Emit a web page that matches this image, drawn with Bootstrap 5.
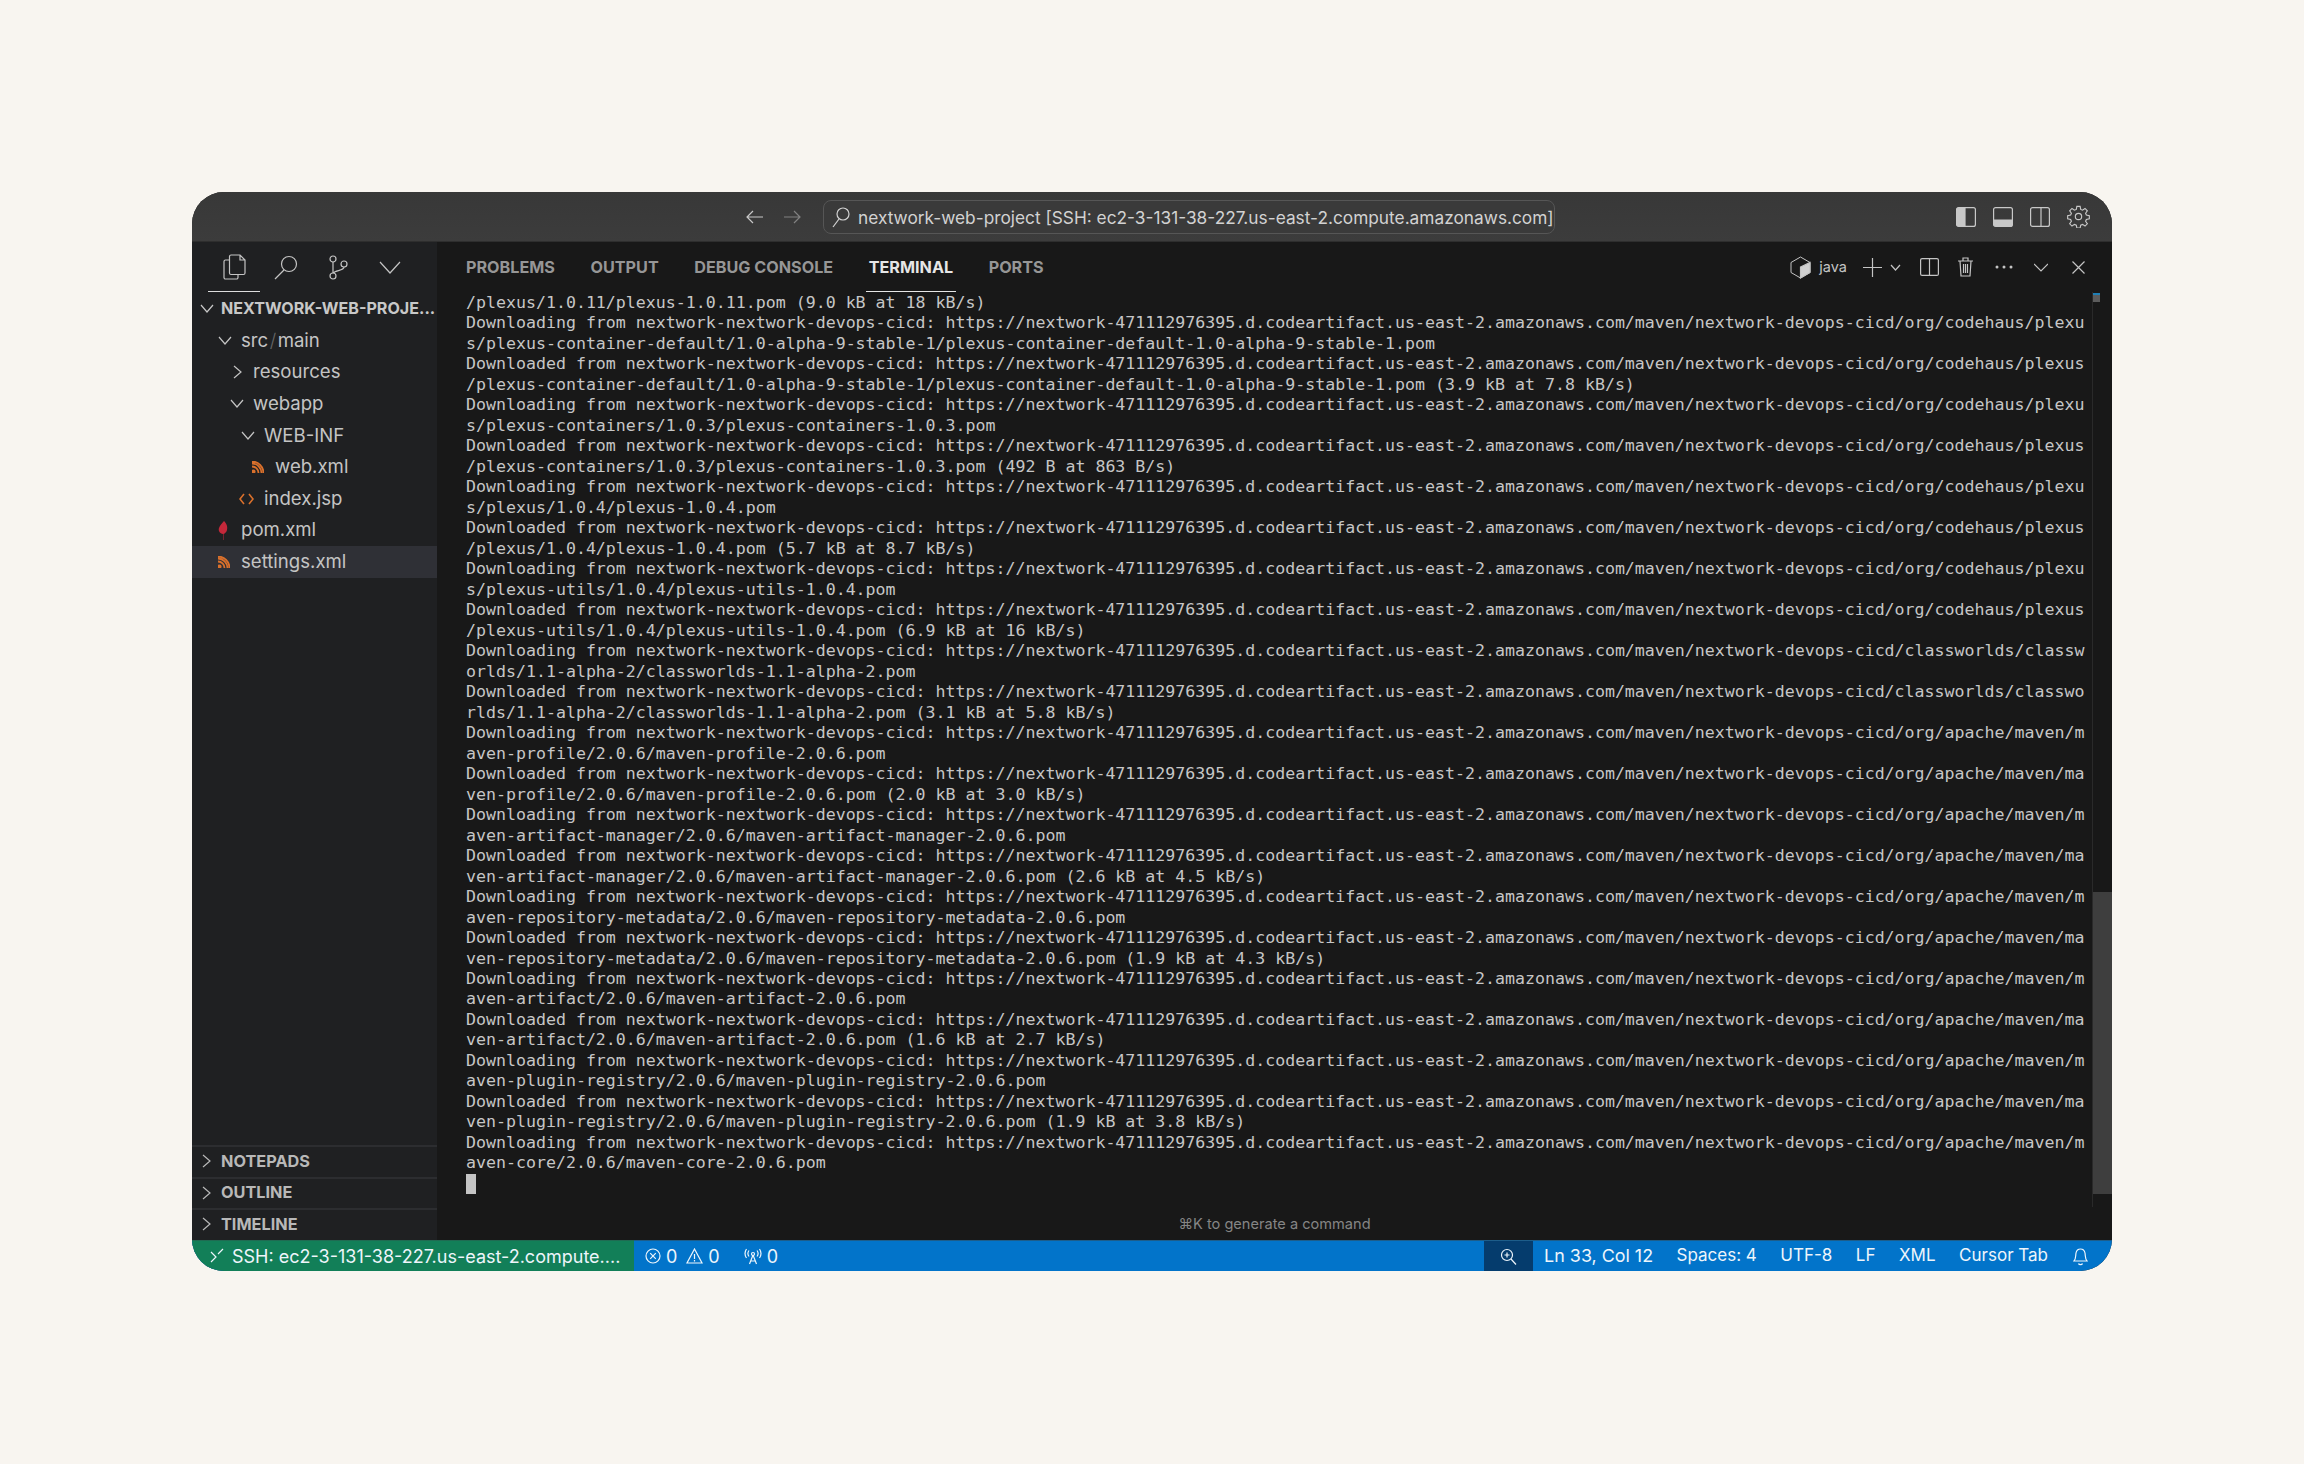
<!DOCTYPE html>
<html lang="en">
<head>
<meta charset="utf-8">
<title>nextwork-web-project</title>
<link rel="stylesheet" href="https://cdn.jsdelivr.net/npm/bootstrap@5.3.0/dist/css/bootstrap.min.css">
<style>
html,body{height:100%}
body{background:#f8f5f0;font-family:Inter,"Noto Sans",sans-serif;overflow:hidden;padding-top:192px;color:#ccc}
svg{display:block;flex:none;fill:none;stroke:currentColor;stroke-width:1.2}
.vs-window{width:1920px;height:1079px;margin-left:192px;border-radius:32px;overflow:hidden;background:#181818}
.vs-title{height:50px;background:linear-gradient(#383838,#3c3c3c);border-bottom:1px solid #2e2e2e;color:#c8c8c8;position:relative}
.vs-nav{padding-left:553px;gap:19px;width:631px}
.vs-search{width:732px;height:34px;border:1px solid #565656;border-radius:8px;background:#3a3a3a;padding-left:7px;font-size:17.3px;color:#d2d2d2;gap:7px;white-space:nowrap}
.vs-search span{padding-top:2px}
.vs-layout{margin-left:auto;padding-right:22px;gap:17px}
.vs-main{height:998px}
.vs-side{width:245px;background:#1f2022;font-size:18.6px;color:#c4c4c4}
.vs-activity{height:50px;padding-left:16px;position:relative;color:#c4c4c4}
.vs-activity-cell{width:52px;height:50px}
.vs-activity-on{border-bottom:1px solid #ddd}
.vs-root{height:33px;padding-left:8px;font-size:16.1px;font-weight:700;color:#c8c8c8;white-space:nowrap}
.vs-row{height:31.6px;white-space:nowrap}
.vs-slot{width:23px;flex:none}
.vs-slot-root{width:21px;flex:none}
.vs-slot-nar{width:20px;flex:none}
.vs-slot-col{width:19px;flex:none}
.vs-l1{padding-left:26px}.vs-l2{padding-left:38px}.vs-l3{padding-left:49px}.vs-l4{padding-left:60px}
.vs-l2b{padding-left:41px}
.vs-sel{background:#2f3036}
.vs-sep{color:#666;padding:0 1.5px;font-weight:300}
.vs-collapsed{height:31.6px;border-top:2px solid #2c2d30;padding:0 0 2px 10px;font-size:16.3px;font-weight:700;color:#b8b8b8}
.vs-panel{min-width:0;background:#181818}
.vs-tabs{height:50px;padding-left:29px;font-size:16.2px;font-weight:700;color:#969696}
.vs-tab{height:50px;padding:0 3px;margin-right:32.5px;display:flex;align-items:center;margin-left:-3px}
.vs-tab-on{color:#e6e6e6;border-bottom:1px solid #e6e6e6;padding-top:1px}
.vs-tools{margin-left:auto;padding-right:27px;color:#c4c4c4;font-size:14.5px;font-weight:400}
.vs-body{height:915px}
.vs-term{margin:0;padding:1px 0 0 29px;width:1655px;flex:none;overflow:hidden;font:16.6px/20.48px "DejaVu Sans Mono",monospace;color:#c6c6c6;white-space:pre}
.vs-cursor{display:block;width:10px;height:20px;background:#c4c4c4}
.vs-scroll{width:20px;flex:none;border-left:1px solid #2a2a2a;padding-top:1px;background:#181818}
.vs-mark{width:7px;height:9px;background:linear-gradient(#1f7fb5 0 2px,#5c5c5c 2px)}
.vs-thumb{height:302px;margin-top:590px;background:#3e3e3e}
.vs-hint{height:33px;font-size:14.6px;color:#858585;padding-top:7px}
.vs-status{height:31px;background:#0274ca;color:#eef5fb;font-size:18px;white-space:nowrap;border-top:1px solid #1d5d8a}
.vs-remote{width:442px;height:31px;margin-top:-1px;background:#127f58;padding-left:18px;gap:8px;border-top:1px solid #1f6b52}
.vs-zoom{width:49px;height:30px;background:#053c6d;margin-left:auto}
.vs-st{gap:5px}
.vs-right{font-size:17px;margin-left:23.5px}
.vs-ln{margin-left:11px;font-size:17.9px}
</style>
</head>
<body>
<div class="vs-window d-flex flex-column">
  <div class="vs-title d-flex align-items-center">
    <div class="vs-nav d-flex align-items-center flex-none">
      <svg width="19" height="16" viewBox="0 0 19 16"><path d="M18 8H2M8 2 2 8l6 6"/></svg>
      <svg width="19" height="16" viewBox="0 0 19 16" style="opacity:.5"><path d="M1 8h16M11 2l6 6-6 6"/></svg>
    </div>
    <div class="vs-search d-flex align-items-center">
      <svg width="20" height="22" viewBox="0 0 20 22"><circle cx="12" cy="8" r="6"/><path d="M8 13 2 21"/></svg>
      <span>nextwork-web-project [SSH: ec2-3-131-38-227.us-east-2.compute.amazonaws.com]</span>
    </div>
    <div class="vs-layout d-flex align-items-center">
      <svg width="20" height="20" viewBox="0 0 20 20"><rect x=".6" y=".6" width="18.8" height="18.8" rx="2"/><path d="M1 2.500a1.500 1.500 0 0 1 1.500-1.500H9v18H2.500A1.500 1.500 0 0 1 1 17.500z" fill="#c8c8c8"/></svg>
      <svg width="20" height="20" viewBox="0 0 20 20"><rect x=".6" y=".6" width="18.800" height="18.800" rx="2"/><path d="M1 13h18v4.500a1.500 1.500 0 0 1-1.500 1.500h-15A1.500 1.500 0 0 1 1 17.500z" fill="#c8c8c8"/></svg>
      <svg width="20" height="20" viewBox="0 0 20 20"><rect x=".6" y=".6" width="18.800" height="18.800" rx="2"/><path d="M11 1v18"/></svg>
      <svg width="23" height="23" viewBox="0 0 24 24"><circle cx="12" cy="12" r="3.300"/><path d="M10.300 1.500h3.400l.6 3.100 1.900.8 2.600-1.800 2.400 2.400-1.800 2.600.8 1.900 3.100.6v3.400l-3.100.6-.8 1.900 1.800 2.600-2.400 2.400-2.600-1.800-1.900.8-.6 3.100h-3.400l-.6-3.100-1.900-.8-2.600 1.800-2.400-2.400 1.800-2.600-.8-1.900-3.100-.6v-3.400l3.100-.6.800-1.900-1.800-2.600 2.400-2.400 2.600 1.800 1.900-.8z"/></svg>
    </div>
  </div>
  <div class="vs-main d-flex">
    <aside class="vs-side d-flex flex-column flex-none">
      <div class="vs-activity d-flex align-items-center">
        <div class="vs-activity-cell vs-activity-on d-flex align-items-center justify-content-center">
          <svg width="23" height="26" viewBox="0 0 23 26"><path d="M8 1h9l5 5v13a1.500 1.500 0 0 1-1.500 1.500H8A1.500 1.500 0 0 1 6.500 19V2.500A1.500 1.500 0 0 1 8 1zM17 1v5h5"/><path d="M6.500 6H2.500A1.500 1.500 0 0 0 1 7.500v16A1.500 1.500 0 0 0 2.500 25h11a1.500 1.500 0 0 0 1.500-1.500v-3"/></svg>
        </div>
        <div class="vs-activity-cell d-flex align-items-center justify-content-center">
          <svg width="24" height="25" viewBox="0 0 24 25"><circle cx="15" cy="9" r="7.500"/><path d="M10 15 1 24"/></svg>
        </div>
        <div class="vs-activity-cell d-flex align-items-center justify-content-center">
          <svg width="20" height="25" viewBox="0 0 20 25"><circle cx="5" cy="4" r="3"/><circle cx="5" cy="21" r="3"/><circle cx="16" cy="9" r="3"/><path d="M5 7v11M16 12c0 4-9 3-10.500 6"/></svg>
        </div>
        <div class="vs-activity-cell d-flex align-items-center justify-content-center">
          <svg width="22" height="13" viewBox="0 0 22 13"><path d="m1 1 10 11L21 1"/></svg>
        </div>
      </div>
      <div class="vs-root d-flex align-items-center"><span class="vs-slot-root"><svg width="14" height="9" viewBox="0 0 14 9"><path d="m1 1 6 7 6-7"/></svg></span><span>NEXTWORK-WEB-PROJE...</span></div>
      <div class="vs-row vs-l1 d-flex align-items-center"><span class="vs-slot"><svg width="14" height="9" viewBox="0 0 14 9"><path d="m1 1 6 7 6-7"/></svg></span><span>src<span class="vs-sep">/</span>main</span></div>
      <div class="vs-row vs-l2b d-flex align-items-center"><span class="vs-slot-nar"><svg width="9" height="14" viewBox="0 0 9 14"><path d="m1 1 7 6-7 6"/></svg></span><span>resources</span></div>
      <div class="vs-row vs-l2 d-flex align-items-center"><span class="vs-slot"><svg width="14" height="9" viewBox="0 0 14 9"><path d="m1 1 6 7 6-7"/></svg></span><span>webapp</span></div>
      <div class="vs-row vs-l3 d-flex align-items-center"><span class="vs-slot"><svg width="14" height="9" viewBox="0 0 14 9"><path d="m1 1 6 7 6-7"/></svg></span><span>WEB-INF</span></div>
      <div class="vs-row vs-l4 d-flex align-items-center"><span class="vs-slot"><svg width="12" height="12" viewBox="0 0 12 12" style="stroke:#d9702c;stroke-width:1.800"><circle cx="1.500" cy="10.500" r="1.200" fill="#d9702c"/><path d="M0 5.500a6.500 6.500 0 0 1 6.500 6.500M0 2.500A9.500 9.500 0 0 1 9.500 12M0 .5A11.500 11.500 0 0 1 11.500 12"/></svg></span><span>web.xml</span></div>
      <div class="vs-row d-flex align-items-center vs-l3"><span class="vs-slot" style="margin-left:-2px;width:25px"><svg width="15" height="12" viewBox="0 0 15 12" style="stroke:#d9702c;stroke-width:1.600"><path d="M5 1 1 6l4 5M10 1l4 5-4 5"/></svg></span><span>index.jsp</span></div>
      <div class="vs-row vs-l1 d-flex align-items-center"><span class="vs-slot"><svg width="10" height="19" viewBox="0 0 10 19" style="stroke:none;fill:#c4283a"><path d="M6 0C8 2 10 5 9 9c-.500 2-2 3.500-3.500 4L5.500 19H5V13C2 12.500 0 10 1 7c.7-2.500 3-4.500 5-7z"/></svg></span><span>pom.xml</span></div>
      <div class="vs-row vs-sel vs-l1 d-flex align-items-center"><span class="vs-slot"><svg width="12" height="12" viewBox="0 0 12 12" style="stroke:#d9702c;stroke-width:1.800"><circle cx="1.500" cy="10.500" r="1.200" fill="#d9702c"/><path d="M0 5.500a6.500 6.500 0 0 1 6.500 6.500M0 2.500A9.500 9.500 0 0 1 9.500 12M0 .5A11.500 11.500 0 0 1 11.500 12"/></svg></span><span>settings.xml</span></div>
      <div class="vs-collapsed d-flex align-items-center mt-auto"><span class="vs-slot-col"><svg width="9" height="14" viewBox="0 0 9 14"><path d="m1 1 7 6-7 6"/></svg></span><span>NOTEPADS</span></div>
      <div class="vs-collapsed d-flex align-items-center"><span class="vs-slot-col"><svg width="9" height="14" viewBox="0 0 9 14"><path d="m1 1 7 6-7 6"/></svg></span><span>OUTLINE</span></div>
      <div class="vs-collapsed d-flex align-items-center"><span class="vs-slot-col"><svg width="9" height="14" viewBox="0 0 9 14"><path d="m1 1 7 6-7 6"/></svg></span><span>TIMELINE</span></div>
    </aside>
    <section class="vs-panel flex-grow-1 d-flex flex-column">
      <div class="vs-tabs d-flex align-items-center">
        <span class="vs-tab">PROBLEMS</span>
        <span class="vs-tab">OUTPUT</span>
        <span class="vs-tab">DEBUG CONSOLE</span>
        <span class="vs-tab vs-tab-on">TERMINAL</span>
        <span class="vs-tab">PORTS</span>
        <div class="vs-tools d-flex align-items-center">
          <svg width="21" height="23" viewBox="0 0 21 23"><path d="M10.500 1 20 6.500v10L10.500 22 1 16.500v-10z" stroke-width="1"/><path d="M10.500 11 20 6.500v10L10.500 22z" fill="#d0d0d0"/></svg>
          <span class="ms-2 me-3">java</span>
          <svg width="19" height="19" viewBox="0 0 19 19"><path d="M9.500 0v19M0 9.500h19"/></svg>
          <svg class="ms-2" width="11" height="7" viewBox="0 0 11 7"><path d="m1 1 4.500 5L10 1"/></svg>
          <svg style="margin-left:19px" width="19" height="18" viewBox="0 0 19 18"><rect x=".6" y=".6" width="17.800" height="16.800" rx="1.500"/><path d="M9.500 1v16"/></svg>
          <svg style="margin-left:19px" width="15" height="20" viewBox="0 0 15 20"><path d="M0 4h15M5 4V1h5v3M2 4l1 15h9l1-15M5.500 7v9M7.500 7v9M9.500 7v9"/></svg>
          <svg style="margin-left:22px" width="18" height="4" viewBox="0 0 18 4"><g fill="#c4c4c4" stroke="none"><circle cx="2" cy="2" r="1.500"/><circle cx="9" cy="2" r="1.500"/><circle cx="16" cy="2" r="1.500"/></g></svg>
          <svg style="margin-left:21px" width="14" height="9" viewBox="0 0 14 9"><path d="m0 1 7 7 7-7"/></svg>
          <svg style="margin-left:24px" width="13" height="13" viewBox="0 0 13 13"><path d="m.5.500 12 12M12.500.500l-12 12"/></svg>
        </div>
      </div>
      <div class="vs-body d-flex">
<pre class="vs-term">/plexus/1.0.11/plexus-1.0.11.pom (9.0 kB at 18 kB/s)
Downloading from nextwork-nextwork-devops-cicd: https://nextwork-471112976395.d.codeartifact.us-east-2.amazonaws.com/maven/nextwork-devops-cicd/org/codehaus/plexu
s/plexus-container-default/1.0-alpha-9-stable-1/plexus-container-default-1.0-alpha-9-stable-1.pom
Downloaded from nextwork-nextwork-devops-cicd: https://nextwork-471112976395.d.codeartifact.us-east-2.amazonaws.com/maven/nextwork-devops-cicd/org/codehaus/plexus
/plexus-container-default/1.0-alpha-9-stable-1/plexus-container-default-1.0-alpha-9-stable-1.pom (3.9 kB at 7.8 kB/s)
Downloading from nextwork-nextwork-devops-cicd: https://nextwork-471112976395.d.codeartifact.us-east-2.amazonaws.com/maven/nextwork-devops-cicd/org/codehaus/plexu
s/plexus-containers/1.0.3/plexus-containers-1.0.3.pom
Downloaded from nextwork-nextwork-devops-cicd: https://nextwork-471112976395.d.codeartifact.us-east-2.amazonaws.com/maven/nextwork-devops-cicd/org/codehaus/plexus
/plexus-containers/1.0.3/plexus-containers-1.0.3.pom (492 B at 863 B/s)
Downloading from nextwork-nextwork-devops-cicd: https://nextwork-471112976395.d.codeartifact.us-east-2.amazonaws.com/maven/nextwork-devops-cicd/org/codehaus/plexu
s/plexus/1.0.4/plexus-1.0.4.pom
Downloaded from nextwork-nextwork-devops-cicd: https://nextwork-471112976395.d.codeartifact.us-east-2.amazonaws.com/maven/nextwork-devops-cicd/org/codehaus/plexus
/plexus/1.0.4/plexus-1.0.4.pom (5.7 kB at 8.7 kB/s)
Downloading from nextwork-nextwork-devops-cicd: https://nextwork-471112976395.d.codeartifact.us-east-2.amazonaws.com/maven/nextwork-devops-cicd/org/codehaus/plexu
s/plexus-utils/1.0.4/plexus-utils-1.0.4.pom
Downloaded from nextwork-nextwork-devops-cicd: https://nextwork-471112976395.d.codeartifact.us-east-2.amazonaws.com/maven/nextwork-devops-cicd/org/codehaus/plexus
/plexus-utils/1.0.4/plexus-utils-1.0.4.pom (6.9 kB at 16 kB/s)
Downloading from nextwork-nextwork-devops-cicd: https://nextwork-471112976395.d.codeartifact.us-east-2.amazonaws.com/maven/nextwork-devops-cicd/classworlds/classw
orlds/1.1-alpha-2/classworlds-1.1-alpha-2.pom
Downloaded from nextwork-nextwork-devops-cicd: https://nextwork-471112976395.d.codeartifact.us-east-2.amazonaws.com/maven/nextwork-devops-cicd/classworlds/classwo
rlds/1.1-alpha-2/classworlds-1.1-alpha-2.pom (3.1 kB at 5.8 kB/s)
Downloading from nextwork-nextwork-devops-cicd: https://nextwork-471112976395.d.codeartifact.us-east-2.amazonaws.com/maven/nextwork-devops-cicd/org/apache/maven/m
aven-profile/2.0.6/maven-profile-2.0.6.pom
Downloaded from nextwork-nextwork-devops-cicd: https://nextwork-471112976395.d.codeartifact.us-east-2.amazonaws.com/maven/nextwork-devops-cicd/org/apache/maven/ma
ven-profile/2.0.6/maven-profile-2.0.6.pom (2.0 kB at 3.0 kB/s)
Downloading from nextwork-nextwork-devops-cicd: https://nextwork-471112976395.d.codeartifact.us-east-2.amazonaws.com/maven/nextwork-devops-cicd/org/apache/maven/m
aven-artifact-manager/2.0.6/maven-artifact-manager-2.0.6.pom
Downloaded from nextwork-nextwork-devops-cicd: https://nextwork-471112976395.d.codeartifact.us-east-2.amazonaws.com/maven/nextwork-devops-cicd/org/apache/maven/ma
ven-artifact-manager/2.0.6/maven-artifact-manager-2.0.6.pom (2.6 kB at 4.5 kB/s)
Downloading from nextwork-nextwork-devops-cicd: https://nextwork-471112976395.d.codeartifact.us-east-2.amazonaws.com/maven/nextwork-devops-cicd/org/apache/maven/m
aven-repository-metadata/2.0.6/maven-repository-metadata-2.0.6.pom
Downloaded from nextwork-nextwork-devops-cicd: https://nextwork-471112976395.d.codeartifact.us-east-2.amazonaws.com/maven/nextwork-devops-cicd/org/apache/maven/ma
ven-repository-metadata/2.0.6/maven-repository-metadata-2.0.6.pom (1.9 kB at 4.3 kB/s)
Downloading from nextwork-nextwork-devops-cicd: https://nextwork-471112976395.d.codeartifact.us-east-2.amazonaws.com/maven/nextwork-devops-cicd/org/apache/maven/m
aven-artifact/2.0.6/maven-artifact-2.0.6.pom
Downloaded from nextwork-nextwork-devops-cicd: https://nextwork-471112976395.d.codeartifact.us-east-2.amazonaws.com/maven/nextwork-devops-cicd/org/apache/maven/ma
ven-artifact/2.0.6/maven-artifact-2.0.6.pom (1.6 kB at 2.7 kB/s)
Downloading from nextwork-nextwork-devops-cicd: https://nextwork-471112976395.d.codeartifact.us-east-2.amazonaws.com/maven/nextwork-devops-cicd/org/apache/maven/m
aven-plugin-registry/2.0.6/maven-plugin-registry-2.0.6.pom
Downloaded from nextwork-nextwork-devops-cicd: https://nextwork-471112976395.d.codeartifact.us-east-2.amazonaws.com/maven/nextwork-devops-cicd/org/apache/maven/ma
ven-plugin-registry/2.0.6/maven-plugin-registry-2.0.6.pom (1.9 kB at 3.8 kB/s)
Downloading from nextwork-nextwork-devops-cicd: https://nextwork-471112976395.d.codeartifact.us-east-2.amazonaws.com/maven/nextwork-devops-cicd/org/apache/maven/m
aven-core/2.0.6/maven-core-2.0.6.pom
<span class="vs-cursor"></span></pre>
        <div class="vs-scroll ms-auto"><div class="vs-mark"></div><div class="vs-thumb"></div></div>
      </div>
      <div class="vs-hint text-center">⌘K to generate a command</div>
    </section>
  </div>
  <footer class="vs-status d-flex align-items-center">
    <div class="vs-remote d-flex align-items-center">
      <svg width="14" height="16" viewBox="0 0 14 16"><path d="m1 4 5 5-5 5M13 1 8 6"/></svg>
      <span>SSH: ec2-3-131-38-227.us-east-2.compute....</span>
    </div>
    <div class="vs-st d-flex align-items-center" style="margin-left:11px">
      <svg width="16" height="16" viewBox="0 0 16 16"><circle cx="8" cy="8" r="7"/><path d="m5.200 5.200 5.600 5.600M10.800 5.200l-5.600 5.600"/></svg><span>0</span>
      <svg class="ms-1" width="17" height="16" viewBox="0 0 17 16"><path d="M8.500 1 16 15H1zM8.500 6v5M8.500 12v1.500"/></svg><span>0</span>
    </div>
    <div class="vs-st d-flex align-items-center" style="margin-left:24px">
      <svg width="18" height="17" viewBox="0 0 18 17"><circle cx="9" cy="6" r="1.500"/><path d="M9 7 5.500 16M9 7l3.500 9M6.500 13h5M5 2.500c-1.500 2-1.500 4 0 6M13 2.500c1.500 2 1.500 4 0 6M2.500 1c-2 3-2 6 0 9M15.500 1c2 3 2 6 0 9"/></svg><span>0</span>
    </div>
    <div class="vs-zoom d-flex align-items-center justify-content-center">
      <svg width="17" height="17" viewBox="0 0 17 17"><circle cx="7" cy="7" r="5.500"/><path d="m11 11 5 5.500M7 4.500v5M4.500 7h5"/></svg>
    </div>
    <span class="vs-ln">Ln 33, Col 12</span>
    <span class="vs-right">Spaces: 4</span>
    <span class="vs-right">UTF-8</span>
    <span class="vs-right">LF</span>
    <span class="vs-right">XML</span>
    <span class="vs-right">Cursor Tab</span>
    <svg style="margin-left:25px;margin-right:24px" width="15" height="19" viewBox="0 0 15 19"><path d="M1 14c2-2 1.500-5 2-8 .5-2.500 2.500-4 4.500-4s4 1.500 4.500 4c.5 3 0 6 2 8zM5.500 16.500c.5 1.500 3.500 1.500 4 0"/></svg>
  </footer>
</div>
</body>
</html>
